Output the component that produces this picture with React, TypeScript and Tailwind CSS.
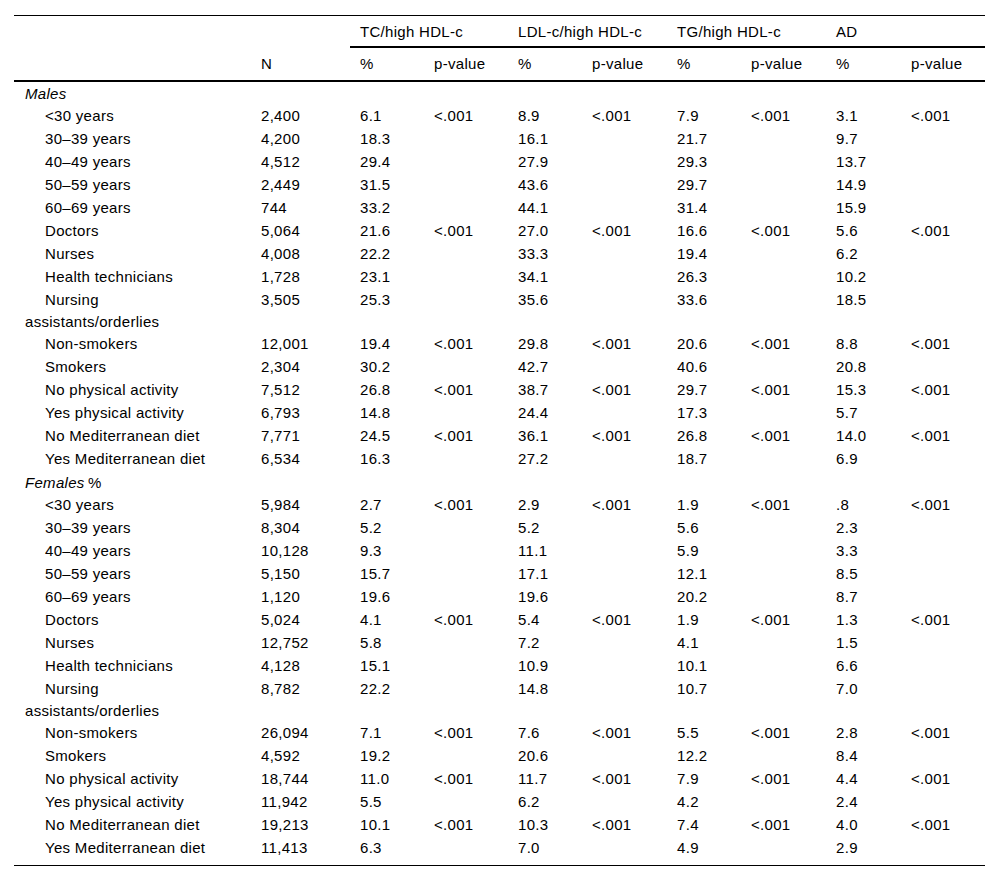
type Row = { label: string; n: string; v: string[] };

const maleRows: Row[] = [
  { label: "<30 years", n: "2,400", v: ["6.1", "<.001", "8.9", "<.001", "7.9", "<.001", "3.1", "<.001"] },
  { label: "30\u201339 years", n: "4,200", v: ["18.3", "", "16.1", "", "21.7", "", "9.7", ""] },
  { label: "40\u201349 years", n: "4,512", v: ["29.4", "", "27.9", "", "29.3", "", "13.7", ""] },
  { label: "50\u201359 years", n: "2,449", v: ["31.5", "", "43.6", "", "29.7", "", "14.9", ""] },
  { label: "60\u201369 years", n: "744", v: ["33.2", "", "44.1", "", "31.4", "", "15.9", ""] },
  { label: "Doctors", n: "5,064", v: ["21.6", "<.001", "27.0", "<.001", "16.6", "<.001", "5.6", "<.001"] },
  { label: "Nurses", n: "4,008", v: ["22.2", "", "33.3", "", "19.4", "", "6.2", ""] },
  { label: "Health technicians", n: "1,728", v: ["23.1", "", "34.1", "", "26.3", "", "10.2", ""] },
  { label: "Nursing assistants/orderlies", n: "3,505", v: ["25.3", "", "35.6", "", "33.6", "", "18.5", ""] },
  { label: "Non-smokers", n: "12,001", v: ["19.4", "<.001", "29.8", "<.001", "20.6", "<.001", "8.8", "<.001"] },
  { label: "Smokers", n: "2,304", v: ["30.2", "", "42.7", "", "40.6", "", "20.8", ""] },
  { label: "No physical activity", n: "7,512", v: ["26.8", "<.001", "38.7", "<.001", "29.7", "<.001", "15.3", "<.001"] },
  { label: "Yes physical activity", n: "6,793", v: ["14.8", "", "24.4", "", "17.3", "", "5.7", ""] },
  { label: "No Mediterranean diet", n: "7,771", v: ["24.5", "<.001", "36.1", "<.001", "26.8", "<.001", "14.0", "<.001"] },
  { label: "Yes Mediterranean diet", n: "6,534", v: ["16.3", "", "27.2", "", "18.7", "", "6.9", ""] },
];

const femaleRows: Row[] = [
  { label: "<30 years", n: "5,984", v: ["2.7", "<.001", "2.9", "<.001", "1.9", "<.001", ".8", "<.001"] },
  { label: "30\u201339 years", n: "8,304", v: ["5.2", "", "5.2", "", "5.6", "", "2.3", ""] },
  { label: "40\u201349 years", n: "10,128", v: ["9.3", "", "11.1", "", "5.9", "", "3.3", ""] },
  { label: "50\u201359 years", n: "5,150", v: ["15.7", "", "17.1", "", "12.1", "", "8.5", ""] },
  { label: "60\u201369 years", n: "1,120", v: ["19.6", "", "19.6", "", "20.2", "", "8.7", ""] },
  { label: "Doctors", n: "5,024", v: ["4.1", "<.001", "5.4", "<.001", "1.9", "<.001", "1.3", "<.001"] },
  { label: "Nurses", n: "12,752", v: ["5.8", "", "7.2", "", "4.1", "", "1.5", ""] },
  { label: "Health technicians", n: "4,128", v: ["15.1", "", "10.9", "", "10.1", "", "6.6", ""] },
  { label: "Nursing assistants/orderlies", n: "8,782", v: ["22.2", "", "14.8", "", "10.7", "", "7.0", ""] },
  { label: "Non-smokers", n: "26,094", v: ["7.1", "<.001", "7.6", "<.001", "5.5", "<.001", "2.8", "<.001"] },
  { label: "Smokers", n: "4,592", v: ["19.2", "", "20.6", "", "12.2", "", "8.4", ""] },
  { label: "No physical activity", n: "18,744", v: ["11.0", "<.001", "11.7", "<.001", "7.9", "<.001", "4.4", "<.001"] },
  { label: "Yes physical activity", n: "11,942", v: ["5.5", "", "6.2", "", "4.2", "", "2.4", ""] },
  { label: "No Mediterranean diet", n: "19,213", v: ["10.1", "<.001", "10.3", "<.001", "7.4", "<.001", "4.0", "<.001"] },
  { label: "Yes Mediterranean diet", n: "11,413", v: ["6.3", "", "7.0", "", "4.9", "", "2.9", ""] },
];

const groups = ["TC/high HDL-c", "LDL-c/high HDL-c", "TG/high HDL-c", "AD"];

function DataRows({ rows }: { rows: Row[] }) {
  return (
    <>
      {rows.map((r, i) => (
        <tr key={i} className="align-top">
          <td className="h-[23px] pl-[11px] pr-[28px] indent-[20px]">{r.label}</td>
          <td className="pl-[10px]">{r.n}</td>
          {r.v.map((x, j) => (
            <td key={j} className="pl-[10px]">
              {x}
            </td>
          ))}
        </tr>
      ))}
    </>
  );
}

export default function App() {
  return (
    <div className="bg-white min-h-[881px] pl-[14px] pt-[15px] text-black text-[15px] tracking-[0.3px] leading-[22px] font-['Liberation_Sans',Arial,sans-serif]">
      <table className="table-fixed w-[971px] border-separate border-spacing-0 border-t border-b border-black">
        <colgroup>
          <col className="w-[237px]" />
          <col className="w-[99px]" />
          <col className="w-[74px]" />
          <col className="w-[84px]" />
          <col className="w-[74px]" />
          <col className="w-[85px]" />
          <col className="w-[74px]" />
          <col className="w-[85px]" />
          <col className="w-[75px]" />
          <col className="w-[84px]" />
        </colgroup>
        <thead>
          <tr className="h-[32px]">
            <th />
            <th />
            {groups.map((g) => (
              <th
                key={g}
                colSpan={2}
                className="pl-[10px] text-left font-normal border-b-2 border-black align-middle pt-px"
              >
                {g}
              </th>
            ))}
          </tr>
          <tr className="h-[34px]">
            <th className="border-b-2 border-black" />
            <th className="pl-[10px] text-left font-normal border-b-2 border-black">N</th>
            {groups.map((g) => (
              <>
                <th key={g + "a"} className="pl-[10px] text-left font-normal border-b-2 border-black">
                  %
                </th>
                <th key={g + "b"} className="pl-[10px] text-left font-normal border-b-2 border-black">
                  p-value
                </th>
              </>
            ))}
          </tr>
        </thead>
        <tbody>
          <tr>
            <td colSpan={10} className="h-[23px] pl-[11px] italic">
              Males
            </td>
          </tr>
          <DataRows rows={maleRows} />
          <tr>
            <td colSpan={10} className="h-[23px] pl-[11px]">
              <i>Females</i>&#8201;%
            </td>
          </tr>
          <DataRows rows={femaleRows} />
          <tr className="h-[5px]">
            <td colSpan={10} />
          </tr>
        </tbody>
      </table>
    </div>
  );
}
